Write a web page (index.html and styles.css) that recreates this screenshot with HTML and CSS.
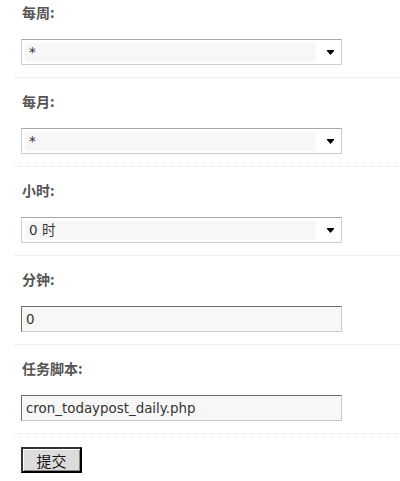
FILE: index.html
```html
<!DOCTYPE html>
<html lang="zh">
<head>
<meta charset="utf-8">
<link rel="stylesheet" href="styles.css">
</head>
<body>
<form class="form">
  <div class="row first">
    <div class="label">每周:</div>
    <div class="select"><span class="value">*</span><span class="arrow"><svg width="7" height="5" viewBox="0 0 7 5"><rect x="0" y="0" width="7" height="1" fill="#000"/><polygon points="0,1 7,1 3.5,5" fill="#000"/></svg></span></div>
  </div>
  <div class="row">
    <div class="label">每月:</div>
    <div class="select"><span class="value">*</span><span class="arrow"><svg width="7" height="5" viewBox="0 0 7 5"><rect x="0" y="0" width="7" height="1" fill="#000"/><polygon points="0,1 7,1 3.5,5" fill="#000"/></svg></span></div>
  </div>
  <div class="row">
    <div class="label">小时:</div>
    <div class="select"><span class="value">0 时</span><span class="arrow"><svg width="7" height="5" viewBox="0 0 7 5"><rect x="0" y="0" width="7" height="1" fill="#000"/><polygon points="0,1 7,1 3.5,5" fill="#000"/></svg></span></div>
  </div>
  <div class="row">
    <div class="label">分钟:</div>
    <input class="input" type="text" value="0">
  </div>
  <div class="row">
    <div class="label">任务脚本:</div>
    <input class="input" type="text" value="cron_todaypost_daily.php">
  </div>
  <div class="row last">
    <button class="btn" type="button">提交</button>
  </div>
</form>
</body>
</html>
```
FILE: styles.css
```css
html, body {
  margin: 0;
  padding: 0;
  background: #fff;
}
body {
  font-family: "DejaVu Sans", "Noto Sans CJK SC", sans-serif;
  font-size: 13px;
  color: #333;
}
.form {
  padding-left: 15px;
}
.row {
  padding: 13px 0 12px 6px;
  border-bottom: 1px dotted #dce1e8;
}
.row.first {
  padding-top: 2px;
}
.row.last {
  border-bottom: none;
  padding-top: 13px;
}
.label {
  font-family: "Noto Sans CJK SC", sans-serif;
  font-weight: bold;
  font-size: 14px;
  line-height: 20px;
  color: #555;
  padding-left: 1px;
  margin-bottom: 17px;
}
.select {
  box-sizing: border-box;
  width: 321px;
  height: 26px;
  border: 1px solid #ccd0d6;
  border-top-color: #a8a8a8;
  background: #fff;
  display: flex;
  align-items: center;
  padding: 3px 0 2px 3px;
}
.value {
  flex: 0 0 291px;
  height: 19px;
  line-height: 19px;
  background: #f7f7f7;
  padding-left: 4px;
  box-sizing: border-box;
  font-family: "DejaVu Sans", "Noto Sans CJK SC", sans-serif;
  font-size: 13.5px;
  color: #333;
}
.arrow {
  flex: 1;
  display: flex;
  justify-content: center;
  padding-left: 4px;
}
.arrow svg {
  display: block;
}
.input {
  display: block;
  box-sizing: border-box;
  width: 321px;
  height: 26px;
  margin: 0;
  border: 1px solid #c8c8c8;
  border-top-color: #6e6e6e;
  border-left-color: #6e6e6e;
  background: #f7f7f7;
  padding: 0 4px;
  font-family: "DejaVu Sans", sans-serif;
  font-size: 13.4px;
  color: #333;
  outline: none;
}
.btn {
  display: block;
  box-sizing: border-box;
  width: 61px;
  height: 26px;
  margin: 0;
  padding: 0;
  border: 2px solid;
  border-color: #333 #000 #000 #333;
  background: #dcdcdc;
  font-family: "Noto Sans CJK SC", sans-serif;
  font-size: 15px;
  color: #111;
  box-shadow: inset 1px 1px 0 #fff, inset -1px -1px 0 #888;
}
```
